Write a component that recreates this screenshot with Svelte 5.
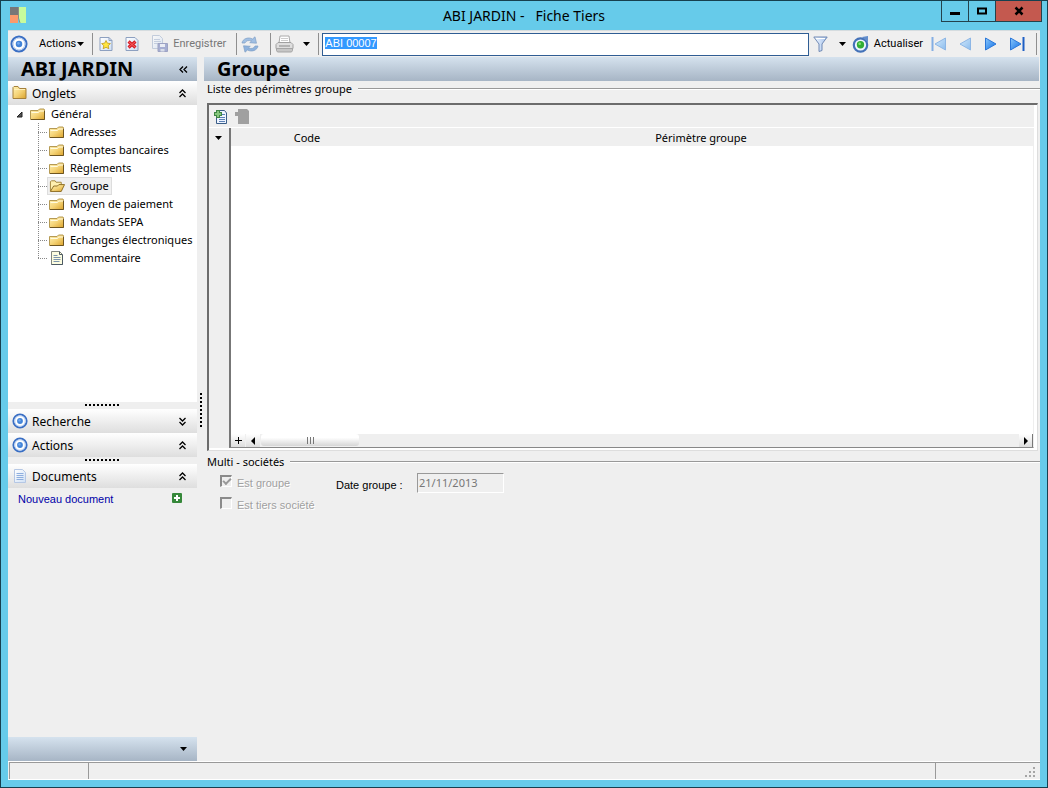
<script lang="ts">
	type TreeItem = { label: string, icon: string };

	const items: TreeItem[] = [
		{ label: 'Adresses', icon: 'folder' },
		{ label: 'Comptes bancaires', icon: 'folder' },
		{ label: 'Règlements', icon: 'folder' },
		{ label: 'Groupe', icon: 'open' },
		{ label: 'Moyen de paiement', icon: 'folder' },
		{ label: 'Mandats SEPA', icon: 'folder' },
		{ label: 'Echanges électroniques', icon: 'folder' },
		{ label: 'Commentaire', icon: 'note' }
	];

	let selected: string = $state('Groupe');
	let code: string = $state('ABI 00007');
	let dateGroupe: string = $state('21/11/2013');
	let searchBox: HTMLInputElement;

	$effect(() => {
		searchBox.focus();
		searchBox.select();
	});
</script>

<svelte:head><title>ABI JARDIN - Fiche Tiers</title></svelte:head>

<!-- shared gradients for the icons -->
<svg class="defs" width="0" height="0" aria-hidden="true">
	<linearGradient id="gold" x1="0" y1="0" x2="1" y2="1"><stop offset="0" stop-color="#fff2b4"/><stop offset=".5" stop-color="#f5d478"/><stop offset="1" stop-color="#dba32c"/></linearGradient>
	<linearGradient id="blue" x1="0" y1="0" x2="1" y2="1"><stop offset="0" stop-color="#8cc8fb"/><stop offset="1" stop-color="#0f6fe6"/></linearGradient>
	<linearGradient id="pale" x1="0" y1="0" x2="1" y2="1"><stop offset="0" stop-color="#d4eafb"/><stop offset="1" stop-color="#8bbcee"/></linearGradient>
	<linearGradient id="paper" x1="0" y1="0" x2="1" y2="1"><stop offset="0" stop-color="#fff"/><stop offset="1" stop-color="#cfe0f5"/></linearGradient>
	<linearGradient id="funnel" x1="0" y1="0" x2="1" y2="0"><stop offset="0" stop-color="#f4f9ff"/><stop offset="1" stop-color="#a3c1ec"/></linearGradient>
</svg>

{#snippet target(size: number)}
	<svg width={size} height={size} viewBox="0 0 16 16"><circle cx="8" cy="8" r="6.7" fill="#fff" stroke="#3a6fc4" stroke-width="1.8"/><circle cx="8" cy="8" r="5.2" fill="none" stroke="#a9c4ec" stroke-width=".7"/><circle cx="8" cy="8" r="2.9" fill="#4384d8"/><circle cx="7.500" cy="7.400" r="1.200" fill="#74aaf0"/></svg>
{/snippet}

{#snippet folder()}
	<svg width="16" height="14" viewBox="0 0 16 14"><path d="M.5 12.500v-9h7.500l1.500-1.500h4.500l.5 1v9.500z" fill="url(#gold)" stroke="#b59a55"/><path d="M1.500 5.500h7l1-1.500h4.500" fill="none" stroke="#fffbe0"/><path d="M1 12.500h13.500V4" fill="none" stroke="#6e5520"/></svg>
{/snippet}

{#snippet bigFolder()}
	<svg width="16" height="16" viewBox="0 0 16 16"><path d="M1 13.500v-11l1-1h4l1.500 2h6.500v10z" fill="url(#gold)" stroke="#a5803b"/><path d="M2 4.500h11" stroke="#fff0ba"/></svg>
{/snippet}

{#snippet openFolder()}
	<svg width="17" height="14" viewBox="0 0 17 14"><path d="M1.500 12.500v-10l1-1h4l1 1.500h5.500v3" fill="#fff0b0" stroke="#a08238"/><path d="M1.500 12.800L5 7h4l1.500-1.500h6l-3.500 7.300z" fill="url(#gold)" stroke="#8a6a20"/></svg>
{/snippet}

{#snippet note()}
	<svg width="16" height="16" viewBox="0 0 16 16"><path d="M2.500 1.500h8l3 3v10h-11z" fill="#fcfce0" stroke="#81867d"/><path d="M10.500 1.500v3h3M13.500 5v9.500h-11" fill="none" stroke="#4c5a64"/><path d="M4.500 5.500h4M4.500 7.500h7M4.500 9.500h7M4.500 11.500h6" stroke="#7c94ac"/></svg>
{/snippet}

{#snippet caret()}
	<svg width="7" height="4" viewBox="0 0 7 4"><path d="M0 0h7L3.500 4z" fill="#000"/></svg>
{/snippet}

{#snippet chevron(dir: string)}
	<svg width="9" height="9" viewBox="0 0 9 9" fill="none" stroke="#000" stroke-width="1.300">
		{#if dir === 'up'}<path d="M1.500 4l3-3 3 3M1.500 8l3-3 3 3"/>
		{:else if dir === 'down'}<path d="M1.500 1l3 3 3-3M1.500 5l3 3 3-3"/>
		{:else}<path d="M4 1.500l-3 3 3 3M8 1.500l-3 3 3 3"/>{/if}
	</svg>
{/snippet}

<div class="window">
	<header class="titlebar">
		<svg class="logo" width="17" height="17" viewBox="0 0 17 17"><path fill="#777" d="M0 0h8v8H0z"/><path fill="#fb9a6c" d="M0 8h8v8H0z"/><path fill="#c7fb9c" d="M9 0h7v16H9z"/><path d="M8.500 0v11l1.500 5" fill="none" stroke="#8b8b83"/></svg>
		<span class="title">ABI JARDIN -&nbsp;&nbsp; Fiche Tiers</span>
		<div class="winbtns">
			<button aria-label="Réduire"><svg width="10" height="10"><path d="M0 6h10v3H0z"/></svg></button>
			<button aria-label="Agrandir"><svg width="10" height="10"><path d="M1 2.500h8v5H1z" fill="none" stroke="#000" stroke-width="2"/></svg></button>
			<button class="close" aria-label="Fermer"><svg width="10" height="10"><path d="M1.500 1.500l7 7M8.500 1.500l-7 7" stroke="#000" stroke-width="2.500"/></svg></button>
		</div>
	</header>

	<div class="client">
		<div class="toolbar">
			<button class="icon" aria-label="Menu">{@render target(18)}</button>
			<button class="menu">Actions {@render caret()}</button>
			<span class="sep"></span>
			<button class="icon" aria-label="Nouveau"><svg width="16" height="16" viewBox="0 0 16 16"><path d="M2 1.500h9l3 3v10H2z" fill="url(#paper)" stroke="#8da0c0"/><path d="M11 1.500v3h3" fill="none" stroke="#8da0c0"/><path d="M8 4.500l1.400 2.700 3 .4-2.200 2.100.6 3L8 11.300l-2.800 1.400.6-3-2.200-2.100 3-.4z" fill="#ffe640" stroke="#c39b1c" stroke-width=".8"/></svg></button>
			<button class="icon" aria-label="Supprimer"><svg width="16" height="16" viewBox="0 0 16 16"><path d="M2 1.500h9l3 3v10H2z" fill="url(#paper)" stroke="#8da0c0"/><path d="M4.500 5.500l7 6M11.500 5.500l-7 6" stroke="#d7202a" stroke-width="3.200"/><path d="M5 6l6 5M11 6l-6 5" stroke="#f86060" stroke-width="1"/></svg></button>
			<button class="save" disabled><svg width="18" height="18" viewBox="0 0 18 18" opacity=".6"><path d="M1.500.5h7l3 3v10h-10z" fill="url(#paper)" stroke="#a5b5cf"/><path d="M3 4.500h6M3 6.500h7M3 8.500h7" stroke="#a9b9d4"/><path d="M7 8.500h9.500v8H7z" fill="#7684c0" stroke="#6872a6"/><path d="M9 9h5v3H9z" fill="#e7ecf8"/><path d="M9.500 14h4v2.500h-4z" fill="#ccd3e6"/></svg>Enregistrer</button>
			<span class="sep"></span>
			<button class="icon" aria-label="Synchroniser" disabled><svg width="18" height="17" viewBox="0 0 18 17"><path d="M1 7c.5-4 6-6.500 10.500-4L14 .8l1.500 6.400-6.800-.5 2-1.700C7.500 4 5 4.500 4 7z" fill="#a0bfe3" stroke="#7f9fc4" stroke-width=".7"/><path d="M17 10c-.5 4-6 6.500-10.500 4L4 16.200 2.500 9.800l6.800.5-2 1.700c3.200 1 5.700.5 6.700-2z" fill="#8eb2dd" stroke="#7f9fc4" stroke-width=".7"/></svg></button>
			<span class="sep wide"></span>
			<button class="print" aria-label="Imprimer"><svg width="19" height="18" viewBox="0 0 19 18"><path d="M4 8L5 1h9l1 7z" fill="#fff" stroke="#aaa"/><path d="M6 3.500h7M6 5.500h7" stroke="#ccc"/><path d="M1 9.500l2-2h13l2 2v4H1z" fill="#dedede" stroke="#a0a0a0"/><path d="M1.500 13.500h16v2l-1 1.500h-14l-1-1.500z" fill="#c6c6c6" stroke="#a5a5a5"/><path d="M4 11h11" stroke="#888"/></svg>{@render caret()}</button>
			<span class="sep"></span>
			<input class="code" aria-label="Code tiers" bind:value={code} bind:this={searchBox} />
			<button class="filter" aria-label="Filtrer"><svg width="15" height="16" viewBox="0 0 15 16"><path d="M.8 1h13.400L9 8v6.500l-3 1V8z" fill="url(#funnel)" stroke="#7089b4"/><path d="M3 2.500h9" stroke="#fff"/></svg>{@render caret()}</button>
			<button class="refresh"><svg width="17" height="17" viewBox="0 0 17 17"><circle cx="8.500" cy="9" r="6.700" fill="#eef6ff" stroke="#4472b8" stroke-width="2.200"/><path d="M10 1l6-1v6.500z" fill="#628dcc"/><circle cx="8.500" cy="8.800" r="3.700" fill="#32ad35"/><circle cx="7.700" cy="7.700" r="1.300" fill="#87e377"/></svg>Actualiser</button>
			<div class="nav">
				<button aria-label="Premier" disabled><svg width="16" height="14"><path d="M1.500 0v14" stroke="#84aee3" stroke-width="2"/><path d="M14.500 1v12L4 7z" fill="url(#pale)" stroke="#8db6e5"/></svg></button>
				<button aria-label="Précédent" disabled><svg width="16" height="14"><path d="M13.500 1v12L3 7z" fill="url(#pale)" stroke="#8db6e5"/></svg></button>
				<button aria-label="Suivant"><svg width="16" height="14"><path d="M2.500 1v12L13 7z" fill="url(#blue)" stroke="#2b77d8"/></svg></button>
				<button aria-label="Dernier"><svg width="16" height="14"><path d="M1.500 1v12L12 7z" fill="url(#blue)" stroke="#2b77d8"/><path d="M14.500 0v14" stroke="#1e5fc4" stroke-width="2"/></svg></button>
			</div>
			<span class="sep"></span>
		</div>

		<div class="body">
			<aside>
				<div class="band">
					<h1>ABI JARDIN</h1>
					<button class="toggle" aria-label="Replier le volet">{@render chevron('left')}</button>
				</div>
				<button class="section">{@render bigFolder()}<span>Onglets</span>{@render chevron('up')}</button>
				<div class="tree">
					<div class="root"><svg width="7" height="7"><path d="M6 1v5H1z" fill="#555" stroke="#222"/></svg><i></i>{@render folder()}<span>Général</span></div>
					<ul>
						{#each items as item}
							<li>
								<button class:selected={selected === item.label} onclick={() => selected = item.label}>
									{#if item.icon === 'open'}{@render openFolder()}
									{:else if item.icon === 'note'}{@render note()}
									{:else}{@render folder()}{/if}
									<span>{item.label}</span>
								</button>
							</li>
						{/each}
					</ul>
				</div>
				<div class="grip"></div>
				<button class="section">{@render target(16)}<span>Recherche</span>{@render chevron('down')}</button>
				<button class="section">{@render target(16)}<span>Actions</span>{@render chevron('up')}</button>
				<div class="grip"></div>
				<button class="section"><svg width="16" height="16" viewBox="0 0 16 16"><path d="M2.500 1.500h8l3 3v10h-11z" fill="url(#paper)" stroke="#b5c7e4"/><path d="M4.500 5.500h7M4.500 7.500h7M4.500 9.500h7M4.500 11.500h7" stroke="#8eaede"/></svg><span>Documents</span>{@render chevron('up')}</button>
				<div class="docs">
					<a href="#nouveau">Nouveau document</a>
					<button aria-label="Ajouter un document"><svg width="10" height="10"><rect width="10" height="10" rx="1" fill="#36883a"/><path d="M5 2v6M2 5h6" stroke="#fff" stroke-width="2"/></svg></button>
				</div>
				<div class="band foot"><button class="toggle" aria-label="Options du volet">{@render caret()}</button></div>
			</aside>

			<div class="splitter"></div>

			<main>
				<div class="band"><h1>Groupe</h1></div>
				<section>
					<h2>Liste des périmètres groupe</h2>
					<div class="gridbox">
						<div class="gridtools">
							<button aria-label="Ajouter une ligne"><svg width="15" height="16" viewBox="0 0 15 16"><path d="M3.500 1.500h8l2 2.500v10.500h-10z" fill="#eef4ff" stroke="#3a5d87"/><path d="M6 5.500h6M6 8.500h6M6 10.500h6M6 12.500h6" stroke="#5c81b5"/><path d="M5 1v8M1 5h8" stroke="#3f8545" stroke-width="4"/><path d="M5 2v6M2 5h6" stroke="#86c67c" stroke-width="2"/></svg></button>
							<button aria-label="Supprimer une ligne" disabled><svg width="15" height="16" viewBox="0 0 15 16"><path d="M3 0h9l2 2v13H3V7H0V3h3z" fill="#a0a0a0"/></svg></button>
						</div>
						<div class="grid">
							<div class="gutter"><button aria-label="Menu de la grille">{@render caret()}</button></div>
							<div class="sheet">
								<table>
									<colgroup><col class="c1" /><col /><col class="c3" /></colgroup>
									<thead><tr><th>Code</th><th>Périmètre groupe</th><td></td></tr></thead>
								</table>
								<div class="hscroll">
									<button class="step" aria-label="Ajouter"><svg width="7" height="7"><path d="M3.500 0v7M0 3.500h7" stroke="#000"/></svg></button>
									<button class="step left" aria-label="Gauche"><svg width="4" height="8"><path d="M4 0v8L0 4z"/></svg></button>
									<div class="thumb"><i></i><i></i><i></i></div>
									<button class="step right" aria-label="Droite"><svg width="4" height="8"><path d="M0 0v8l4-4z"/></svg></button>
								</div>
							</div>
						</div>
					</div>
				</section>
				<section>
					<h2>Multi - sociétés</h2>
					<div class="fields">
						<div class="checks">
							<label><input type="checkbox" checked disabled />Est groupe</label>
							<label><input type="checkbox" disabled />Est tiers société</label>
						</div>
						<label class="date" for="date">Date groupe :</label>
						<input id="date" bind:value={dateGroupe} disabled />
					</div>
				</section>
			</main>
		</div>

		<footer>
			<span class="s1"></span><span class="s2"></span>
			<span class="s3"><svg width="11" height="11" fill="#a5a5a5"><path d="M8 0h2v2H8zM4 4h2v2H4zM8 4h2v2H8zM0 8h2v2H0zM4 8h2v2H4zM8 8h2v2H8z"/></svg></span>
		</footer>
	</div>
</div>

<style>
	:global(body) { margin:0; }
	* { box-sizing:border-box; }
	button { padding:0; border:0; background:none; color:inherit; font:inherit; }
	svg { display:block; flex:none; }
	.defs { position:absolute; }

	.window { display:flex; flex-direction:column; min-height:100vh; padding:0 7px 7px; border:1px solid #16404f; background:#66cbea; color:#000; font:12px/18px "Noto Sans", "Open Sans", sans-serif; }
	.titlebar { display:flex; align-items:center; height:29px; }
	.logo { margin-left:2px; }
	.title { flex:1; padding-left:80px; text-align:center; font-size:14px; }
	.winbtns { display:flex; align-self:flex-start; margin-right:-2px; border:1px solid #23424c; border-top:0; }
	.winbtns button { display:grid; place-items:center; width:27px; height:20px; border-right:1px solid #23424c; }
	.winbtns .close { width:45px; border:0; background:#c4594f; }

	.client { display:flex; flex:1; flex-direction:column; background:#efefef; }
	.toolbar { display:flex; align-items:center; height:27px; padding-right:3px; border-top:1px solid #d5dcdf; font:11px/16px Roboto, sans-serif; }
	.toolbar button { display:flex; align-items:center; }
	.toolbar .icon { justify-content:center; width:26px; }
	.toolbar .icon:first-child { width:22px; }
	.sep { width:1px; height:22px; background:#8f8f8f; }
	.wide { margin:0 1px 0 7px; }
	.menu { gap:1px; padding:0 8px 0 9px; white-space:nowrap; }
	.save { gap:4px; padding:0 10px 0 6px; color:#777; }
	.print { gap:9px; padding:0 8px 0 3px; }
	.code { flex:1; min-width:60px; height:23px; margin-left:3px; padding:0 2px 3px; border:1px solid #2f5d94; outline:0; background:#fff; font:11px/14px "Liberation Sans", sans-serif; }
	.code::selection { background:#3399ff; color:#fff; }
	.filter { gap:11px; padding:0 6px 0 4px; }
	.refresh { gap:5px; }
	.nav { display:flex; gap:10px; margin:0 11px 0 8px; }

	.body { display:flex; flex:1; }
	aside { display:flex; flex-direction:column; width:189px; }
	.band { display:flex; align-items:center; height:24px; background:linear-gradient(#d5e2ee, #a7b5c5); }
	h1 { flex:1; margin:0; padding-left:13px; font:bold 20px/24px "Noto Sans", sans-serif; }
	.toggle { width:27px; }
	.toggle svg { margin:auto; }
	.foot { justify-content:flex-end; }
	.section { display:flex; align-items:center; gap:4px; height:24px; padding:0 10px 0 4px; background:linear-gradient(#fff, #dedede); text-align:left; }
	.section span { flex:1; padding-top:1px; }
	.tree { min-height:297px; background:#fff; font-size:11px; }
	.root { display:flex; align-items:center; height:18px; padding-left:8px; }
	.root i { width:7px; }
	.root span { padding-left:5px; }
	ul { margin:0; padding:0 0 0 30px; list-style:none; }
	li { display:flex; align-items:center; height:18px; background:repeating-linear-gradient(#888 0 1px, transparent 1px 2px) 0 0 / 1px 100% no-repeat; }
	li:last-child { background-size:1px 50%; }
	li::before { content:""; flex:none; width:9px; border-top:1px dotted #888; }
	li button { display:flex; align-items:center; gap:5px; height:18px; padding:0 3px 0 2px; white-space:nowrap; }
	li svg { width:16px; }
	li button.selected { background:#f0f0f0; box-shadow:inset 0 0 0 1px #ddd; }
	.grip { height:7px; background:repeating-linear-gradient(90deg, #000 0 2px, transparent 2px 4px) center 2px / 35px 2px no-repeat, #efefef; }
	.docs { display:flex; flex:1; align-items:flex-start; justify-content:space-between; padding:4px 15px 0 10px; font:11px/14px "Liberation Sans", sans-serif; }
	.docs a { color:#0000a8; text-decoration:none; }
	.docs button { margin-top:1px; }
	.splitter { width:7px; background:repeating-linear-gradient(#000 0 2px, transparent 2px 4px) 3px 336px / 2px 34px no-repeat; }

	main { flex:1; min-width:0; }
	main .band { margin-right:1px; }
	h2 { display:flex; align-items:center; gap:6px; margin:0 0 0 3px; font:11px/16px "Noto Sans", sans-serif; }
	h2::after { content:""; flex:1; border-top:1px solid #999; border-bottom:1px solid #fff; }
	.gridbox { margin:6px 2px 3px 3px; padding:0 3px 2px 0; border:2px solid #6c6c6c; border-right:1px solid #ddd; border-bottom:1px solid #ddd; background:#fff; }
	.gridtools { display:flex; gap:7px; height:23px; padding:2px 0 0 4px; border-bottom:1px solid #fff; background:#efefef; }
	.gridtools button { align-self:flex-start; padding-top:2px; }
	.grid { display:flex; height:320px; }
	.gutter { width:20px; background:#efefef; }
	.gutter button { display:block; padding:8px 6px; }
	.sheet { display:flex; flex:1; flex-direction:column; justify-content:space-between; border-left:2px solid #777; border-bottom:1px solid #888; border-right:1px solid #eee; }
	table { width:100%; border-collapse:collapse; table-layout:fixed; background:#efefef; font-size:11px; }
	th, td { height:18px; padding:2px 0 0; font-weight:normal; line-height:16px; }
	.c1 { width:152px; }
	.c3 { width:14px; }
	.hscroll { display:flex; height:13px; background:#efefef; }
	.step { display:grid; place-items:center; width:14px; background:linear-gradient(#fff, #ddd); }
	.left { margin:0 1px; }
	.right { margin-left:auto; border-right:1px solid #777; }
	.thumb { display:flex; align-items:center; justify-content:center; gap:2px; width:98px; height:12px; border-radius:3px; background:linear-gradient(#fff 30%, #d6d6d6); }
	.thumb i { width:1px; height:7px; background:#777; }

	.fields { display:flex; align-items:flex-start; padding:3px 0 0 16px; font:11px/14px "Liberation Sans", sans-serif; }
	.checks { display:flex; flex-direction:column; gap:7px; width:116px; padding-top:2px; color:#a0a0a0; text-shadow:1px 1px #fff; }
	.checks label { display:flex; align-items:center; gap:5px; height:15px; padding-top:1px; }
	.checks input { appearance:none; width:12px; height:12px; margin:-4px 0 0; border:1px solid #fff; border-top:2px solid #8b8b8b; border-left:2px solid #8b8b8b; }
	.checks input:checked::before { content:""; display:block; width:6px; height:3px; margin:1px; border:solid #999; border-width:0 0 2px 2px; transform:rotate(-45deg); }
	.date { width:81px; padding-top:5px; }
	#date { width:87px; height:20px; padding:0 1px 2px; border:1px solid #fff; border-top-color:#999; border-left-color:#999; background:#efefef; color:#777; font:11px/14px "Noto Sans", sans-serif; }

	footer { display:flex; height:19px; border-top:1px solid #fff; border-bottom:1px solid #fff; }
	footer span { border-top:1px solid #999; border-left:1px solid #999; }
	.s1 { width:79px; margin-left:1px; }
	.s2 { flex:1; }
	.s3 { display:flex; align-items:flex-end; justify-content:flex-end; width:105px; padding:0 4px 1px 0; }
</style>
